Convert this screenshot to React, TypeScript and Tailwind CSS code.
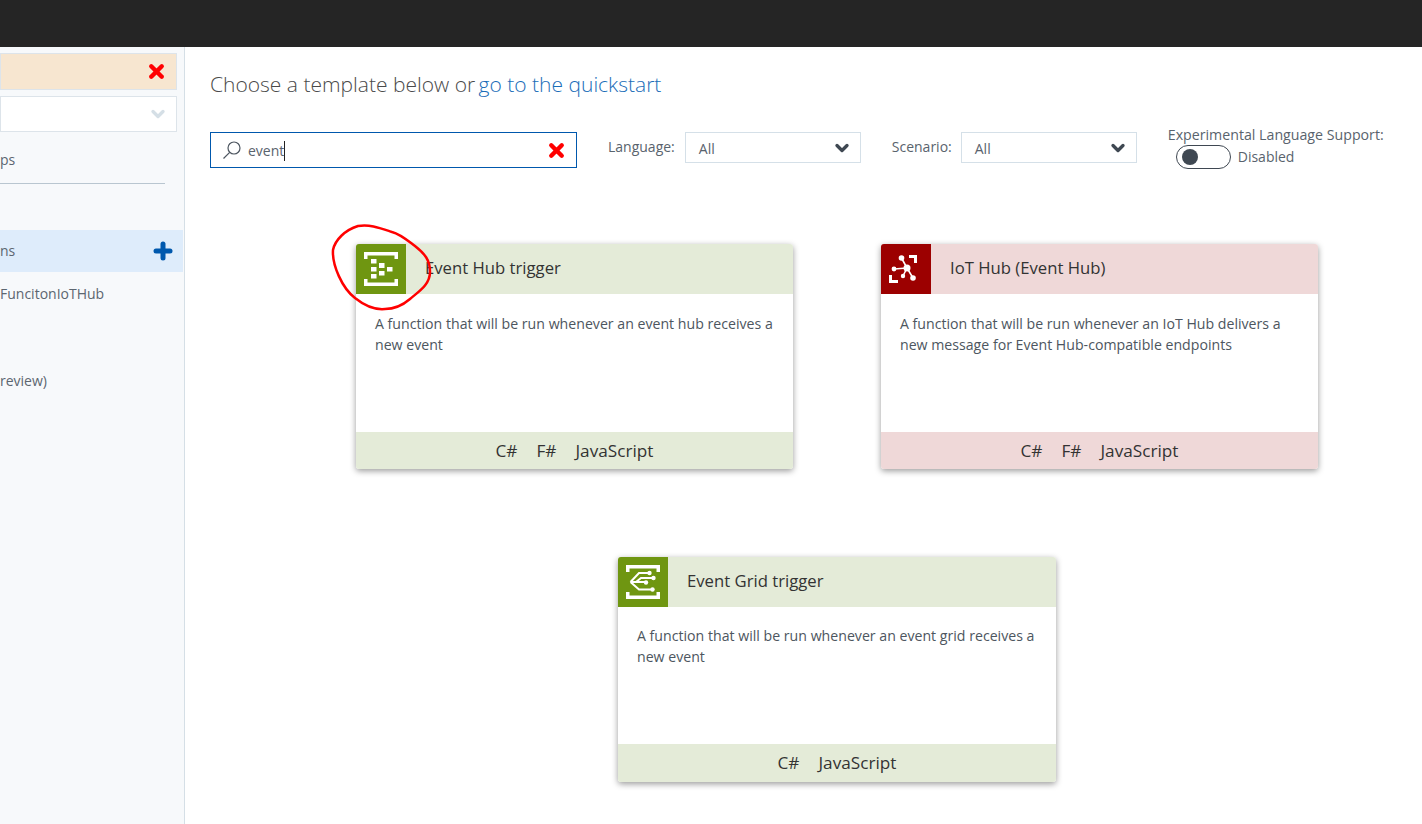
import { ChevronDown, Plus, X } from 'lucide-react';
import React from 'react';

type Card = {
  title: string;
  text: string;
  langs: string[];
  tone: 'green' | 'red';
  icon: React.ReactNode;
  width: string;
  bodyTop: string;
  footer: string;
};

const brackets = 'M8 8h34v7h-3.500v-3.500h-27V15H8zM8 42h34v-7h-3.500v3.500h-27V35H8z';

function HubIcon() {
  return (
    <svg width="50" height="50" viewBox="0 0 50 50" fill="#fff">
      <path d={brackets} />
      <rect x="15" y="15" width="5.500" height="4.500" />
      <rect x="23" y="19" width="5.500" height="5" />
      <rect x="15" y="23" width="5.500" height="4.500" />
      <rect x="31" y="23" width="5.500" height="4.500" />
      <rect x="23" y="27" width="5.500" height="4.500" />
      <rect x="15" y="30" width="5.500" height="4.500" />
    </svg>
  );
}

function IotIcon() {
  return (
    <svg width="50" height="50" viewBox="0 0 50 50" fill="#fff" stroke="#fff">
      <path d="M28 11h8v8h-3v-5h-5zM8 31h3v5h6v3H8z" stroke="none" />
      <path d="M13 25L26 24M20.500 14L26 24M26 24L22 32M26 24L32 34" fill="none" strokeWidth="1.600" />
      <circle cx="20.500" cy="14" r="2.800" stroke="none" />
      <circle cx="13" cy="25" r="2.400" stroke="none" />
      <circle cx="26" cy="24" r="3.500" stroke="none" />
      <circle cx="22" cy="32" r="2.200" stroke="none" />
      <circle cx="32" cy="34" r="2.800" stroke="none" />
    </svg>
  );
}

function GridIcon() {
  return (
    <svg width="50" height="50" viewBox="0 0 50 50" fill="#fff">
      <path d={brackets} />
      <path
        d="M12.500 25L21 16H31M12.500 25H28M12.500 25L21 32.500H34M18 25L23 21H36"
        fill="none"
        stroke="#fff"
        strokeWidth="2"
      />
      <circle cx="31.500" cy="16" r="2.200" />
      <circle cx="35.500" cy="21" r="2.200" />
      <circle cx="28" cy="25.500" r="2.200" />
      <circle cx="34.500" cy="32.500" r="2.200" />
    </svg>
  );
}

const cards: Card[] = [
  {
    title: 'Event Hub trigger',
    text: 'A function that will be run whenever an event hub receives a new event',
    langs: ['C#', 'F#', 'JavaScript'],
    tone: 'green',
    icon: <HubIcon />,
    width: 'w-[437px]',
    bodyTop: 'pt-[19px]',
    footer: 'h-[37px] pt-[1px]',
  },
  {
    title: 'IoT Hub (Event Hub)',
    text: 'A function that will be run whenever an IoT Hub delivers a new message for Event Hub-compatible endpoints',
    langs: ['C#', 'F#', 'JavaScript'],
    tone: 'red',
    icon: <IotIcon />,
    width: 'w-[437px]',
    bodyTop: 'pt-[19px]',
    footer: 'h-[37px] pt-[1px]',
  },
  {
    title: 'Event Grid trigger',
    text: 'A function that will be run whenever an event grid receives a new event',
    langs: ['C#', 'JavaScript'],
    tone: 'green',
    icon: <GridIcon />,
    width: 'w-[438px]',
    bodyTop: 'pt-[18px]',
    footer: 'h-[38px]',
  },
];

function TemplateCard({ card }: { card: Card }) {
  const green = card.tone === 'green';
  return (
    <div className={`flex h-[225px] flex-col overflow-hidden rounded-[3px] bg-white shadow-[0_2px_6px_rgba(0,0,0,0.4)] ${card.width}`}>
      <div className={`flex h-[50px] items-center ${green ? 'bg-[#e4ebd8]' : 'bg-[#efd8d8]'}`}>
        <div className={`h-[50px] w-[50px] ${green ? 'bg-[#6f9611]' : 'bg-[#9c0000]'}`}>{card.icon}</div>
        <span className="-mt-[3px] ml-[19px] text-[16.7px] text-[#333]">{card.title}</span>
      </div>
      <p className={`flex-1 px-[19px] text-[14.15px] leading-[21px] text-[#4d5660] ${card.bodyTop}`}>{card.text}</p>
      <div className={`flex items-center justify-center gap-[19px] text-[17.2px] font-medium text-[#333] ${card.footer} ${green ? 'bg-[#e4ebd8]' : 'bg-[#efd8d8]'}`}>
        {card.langs.map((lang) => (
          <span key={lang}>{lang}</span>
        ))}
      </div>
    </div>
  );
}

function Select() {
  return (
    <div className="flex h-[31px] w-[176px] items-center justify-between border border-[#d5e0e8] pl-[13px] pr-[8px] pt-[1px] text-[14px] text-[#59636d]">
      <span>All</span>
      <ChevronDown size={20} strokeWidth={4} className="text-[#3f4852]" />
    </div>
  );
}

export default function App() {
  return (
    <div className="flex h-[824px] flex-col overflow-hidden bg-white font-['Open_Sans',sans-serif]">
      <div className="h-[47px] bg-[#252525]" />
      <div className="relative flex flex-1">
        {/* 왼쪽 메뉴 */}
        <div className="flex w-[185px] flex-col border-r border-[#d5dfe6] bg-[#f7f9fb] text-[14px] text-[#5c6670]">
          <div className="mr-[7px] mt-[6px] flex h-[37px] items-center justify-end border border-[#dde4ea] bg-[#f7e6d0] pr-[9px]">
            <X size={21} strokeWidth={5} className="text-[#ff0000]" />
          </div>
          <div className="mr-[7px] mt-[6px] flex h-[36px] items-center justify-end border border-[#dde4ea] bg-white pr-[8px]">
            <ChevronDown size={20} strokeWidth={4} className="text-[#d5dfe6]" />
          </div>
          <div className="mr-[19px] mt-[18px] h-[34px] border-b border-[#b9c6d0] leading-[20px]">ps</div>
          <div className="mr-[1px] mt-[46px] flex h-[42px] items-center justify-between bg-[#deecfb] pb-[1px] pr-[8px]">
            <span>ns</span>
            <Plus size={24} strokeWidth={5} className="text-[#0058ad]" />
          </div>
          <div className="mt-[12px] leading-[20px]">FuncitonIoTHub</div>
          <div className="mt-[67px] leading-[20px]">review)</div>
        </div>

        <div className="flex-1 pl-[25px]">
          <h1 className="mt-[22px] text-[21px] font-light leading-[30px] text-[#4a4a4a]">
            Choose a template below or <a className="-ml-[2px] text-[#1a6db8]">go to the quickstart</a>
          </h1>

          <div className="mt-[33px] flex items-start">
            <div className="flex h-[36px] w-[367px] items-center border border-[#0058ad] pl-[11px] pr-[9px] text-[14px] text-[#59636d]">
              <svg width="20" height="20" viewBox="0 0 20 20" fill="none" stroke="#4d5660" strokeWidth="1.200">
                <circle cx="12" cy="8" r="6" />
                <path d="M7.700 12.300L1.500 18.500" />
              </svg>
              <span className="ml-[6px] mt-[1px] border-r border-[#222] leading-[20px]">event</span>
              <X size={21} strokeWidth={5} className="ml-auto text-[#ff0000]" />
            </div>
            <span className="ml-[31px] mt-[5px] text-[14px] leading-[20px] text-[#59636d]">Language:</span>
            <div className="ml-[10px]">
              <Select />
            </div>
            <span className="ml-[31px] mt-[5px] text-[14px] leading-[20px] text-[#59636d]">Scenario:</span>
            <div className="ml-[9px]">
              <Select />
            </div>
            <div className="ml-[31px] -mt-[7px] text-[14.2px] leading-[20px] text-[#59636d]">
              <div>Experimental Language Support:</div>
              <div className="ml-[8px] flex items-center gap-[7px] text-[14px]">
                <div className="flex h-[24px] w-[55px] items-center rounded-full border border-[#3f4852] pl-[5px]">
                  <div className="h-[16px] w-[16px] rounded-full bg-[#3f4852]" />
                </div>
                <span>Disabled</span>
              </div>
            </div>
          </div>

          <div className="ml-[146px] mt-[75px] flex w-[962px] flex-wrap justify-center gap-x-[88px] gap-y-[88px]">
            {cards.map((card) => (
              <TemplateCard key={card.title} card={card} />
            ))}
          </div>
        </div>

        {/* 빨간 손글씨 동그라미 */}
        <svg className="absolute left-[325px] top-[173px]" width="115" height="100" viewBox="0 0 115 100" fill="none" stroke="#f00" strokeWidth="2.500">
          <path d="M33 6C20 10 10 20 8 30C7 45 17 68 30 78C40 86 50 90 60 89C70 89 78 85 85 79C93 72 105 65 105 52C105 40 100 34 90 26C82 20 75 14 67 12C55 8 45 4 33 6Z" />
        </svg>
      </div>
    </div>
  );
}
